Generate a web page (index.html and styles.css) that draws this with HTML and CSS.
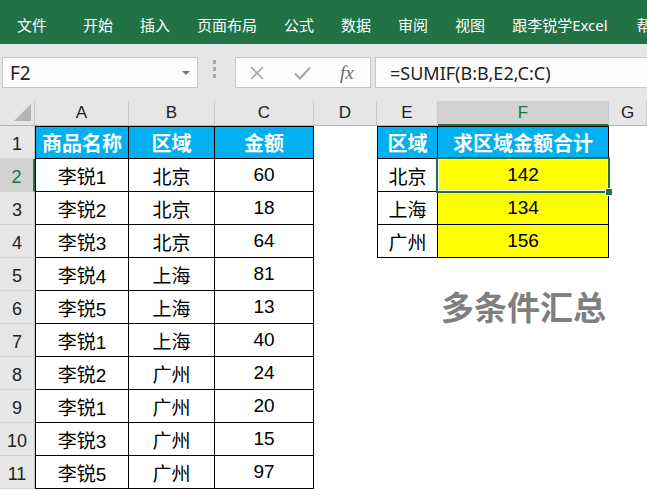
FILE: index.html
```html
<!DOCTYPE html>
<html lang="zh-CN">

<head>
    <meta charset="UTF-8">
    <title>多条件汇总</title>
    <link rel="stylesheet" href="styles.css">
</head>

<body>
    <div class="ribbon">
        <span class="tab tab-file">文件</span>
        <span class="tab">开始</span>
        <span class="tab">插入</span>
        <span class="tab">页面布局</span>
        <span class="tab">公式</span>
        <span class="tab">数据</span>
        <span class="tab">审阅</span>
        <span class="tab">视图</span>
        <span class="tab">跟李锐学Excel</span>
        <span class="tab">帮助</span>
    </div>

    <div class="fbar">
        <div class="namebox">
            <span>F2</span>
            <i class="caret"></i>
        </div>
        <div class="grip"><b></b><b></b><b></b></div>
        <div class="fnbox">
            <svg class="ico-x" width="14" height="14" viewBox="0 0 14 14">
                <path d="M1 1 L13 13 M13 1 L1 13" stroke="#a8a8a8" stroke-width="1.6" fill="none" />
            </svg>
            <svg class="ico-ok" width="17" height="14" viewBox="0 0 17 14">
                <path d="M1 7.5 L6 12.5 L16 1.5" stroke="#a8a8a8" stroke-width="2.2" fill="none" />
            </svg>
            <span class="fx">fx</span>
        </div>
        <div class="formula">=SUMIF(B:B,E2,C:C)</div>
    </div>

    <div class="sheet">
        <!-- column headers -->
        <div class="corner"></div>
        <div class="hd">A</div>
        <div class="hd">B</div>
        <div class="hd">C</div>
        <div class="hd">D</div>
        <div class="hd">E</div>
        <div class="hd hd-sel">F</div>
        <div class="hd">G</div>

        <!-- row 1 -->
        <div class="rh">1</div>
        <div class="t th l tp">商品名称</div>
        <div class="t th tp">区域</div>
        <div class="t th tp">金额</div>
        <div class="c"></div>
        <div class="t th l tp">区域</div>
        <div class="t th tp">求区域金额合计</div>
        <div class="c"></div>

        <!-- row 2 -->
        <div class="rh rh-sel">2</div>
        <div class="t l">李锐1</div>
        <div class="t">北京</div>
        <div class="t">60</div>
        <div class="c"></div>
        <div class="t l">北京</div>
        <div class="t y active">142<span class="handle"></span></div>
        <div class="c"></div>

        <!-- row 3 -->
        <div class="rh">3</div>
        <div class="t l">李锐2</div>
        <div class="t">北京</div>
        <div class="t">18</div>
        <div class="c"></div>
        <div class="t l">上海</div>
        <div class="t y">134</div>
        <div class="c"></div>

        <!-- row 4 -->
        <div class="rh">4</div>
        <div class="t l">李锐3</div>
        <div class="t">北京</div>
        <div class="t">64</div>
        <div class="c"></div>
        <div class="t l">广州</div>
        <div class="t y">156</div>
        <div class="c"></div>

        <div class="rh">5</div>
        <div class="t l">李锐4</div>
        <div class="t">上海</div>
        <div class="t">81</div>
        <div class="c span4"></div>

        <div class="rh">6</div>
        <div class="t l">李锐5</div>
        <div class="t">上海</div>
        <div class="t">13</div>
        <div class="c span4"></div>

        <div class="rh">7</div>
        <div class="t l">李锐1</div>
        <div class="t">上海</div>
        <div class="t">40</div>
        <div class="c span4"></div>

        <div class="rh">8</div>
        <div class="t l">李锐2</div>
        <div class="t">广州</div>
        <div class="t">24</div>
        <div class="c span4"></div>

        <div class="rh">9</div>
        <div class="t l">李锐1</div>
        <div class="t">广州</div>
        <div class="t">20</div>
        <div class="c span4"></div>

        <div class="rh">10</div>
        <div class="t l">李锐3</div>
        <div class="t">广州</div>
        <div class="t">15</div>
        <div class="c span4"></div>

        <div class="rh">11</div>
        <div class="t l">李锐5</div>
        <div class="t">广州</div>
        <div class="t">97</div>
        <div class="c span4"></div>

        <div class="title">多条件汇总</div>
    </div>
</body>

</html>
```

FILE: styles.css
```css
body {
    margin: 0;
    width: 647px;
    height: 491px;
    overflow: hidden;
    background-color: #fff;
    font-family: "Liberation Sans", "Noto Sans CJK SC", sans-serif;
}

/* ribbon */
.ribbon {
    height: 44px;
    box-sizing: border-box;
    padding: 4px 0 0 17px;
    display: flex;
    align-items: center;
    gap: 27px;
    background-color: #217346;
    color: #fff;
    font-family: "Noto Sans CJK SC", sans-serif;
    font-size: 15px;
    white-space: nowrap;
}

.tab-file {
    margin-right: 9px;
}

.tab:nth-child(9) {
    font-family: "Noto Sans", "Noto Sans CJK SC", sans-serif;
    margin-right: 2px;
}

/* formula bar */
.fbar {
    height: 57px;
    box-sizing: border-box;
    padding-top: 13px;
    display: flex;
    align-items: flex-start;
    background-color: #e6e6e6;
}

.namebox,
.fnbox,
.formula {
    height: 31px;
    box-sizing: border-box;
    border: 1px solid #c6c6c6;
    background-color: #fdfdfd;
    display: flex;
    align-items: center;
}

.namebox {
    width: 196px;
    margin-left: 2px;
    padding: 0 0 0 7px;
    font-family: "Noto Sans", sans-serif;
    font-size: 19px;
    color: #222;
    justify-content: space-between;
}

.caret {
    width: 0;
    height: 0;
    margin-right: 7px;
    border-left: 4px solid transparent;
    border-right: 4px solid transparent;
    border-top: 4px solid #767676;
}

.grip {
    width: 4px;
    margin: 3px 0 0 15px;
    display: flex;
    flex-direction: column;
    gap: 3px;
}

.grip b {
    display: block;
    width: 3px;
    height: 4px;
    background-color: #a9a9a9;
}

.fnbox {
    width: 136px;
    margin-left: 18px;
    padding-left: 14px;
}

.ico-ok {
    margin-left: 30px;
}

.fx {
    margin-left: 29px;
    font-family: "Liberation Serif", serif;
    font-style: italic;
    font-size: 19px;
    color: #6a6a6a;
}

.formula {
    flex: 1;
    margin-left: 4px;
    padding-left: 14px;
    border-right: none;
    font-family: "Noto Sans", sans-serif;
    font-size: 18px;
    color: #222;
}

/* sheet */
.sheet {
    position: relative;
    display: grid;
    grid-template-columns: 35px 94px 86px 99px 63px 61px 171px 1fr;
    grid-template-rows: 25px repeat(11, 33px);
    font-size: 19px;
    color: #000;
}

.sheet > div {
    box-sizing: border-box;
    display: flex;
    align-items: center;
    justify-content: center;
}

.corner {
    position: relative;
    background-color: #e6e6e6;
    border-right: 1px solid #c8c8c8;
    border-bottom: 1px solid #b5b5b5;
}

.corner::after {
    content: "";
    position: absolute;
    right: 3px;
    bottom: 4px;
    width: 0;
    height: 0;
    border-left: 17px solid transparent;
    border-bottom: 17px solid #b4b4b4;
}

.hd {
    background-color: #e6e6e6;
    border-right: 1px solid #c8c8c8;
    border-bottom: 1px solid #b5b5b5;
    font-size: 17px;
    color: #222;
}

.hd-sel {
    background-color: #d2d2d2;
    border-bottom: 2px solid #217346;
    color: #217346;
}

.rh {
    background-color: #e6e6e6;
    border-right: 1px solid #c8c8c8;
    border-bottom: 1px solid #d4d4d4;
    padding-top: 5px;
    font-size: 18px;
    color: #222;
}

.rh-sel {
    background-color: #d2d2d2;
    border-right: 2px solid #217346;
    color: #217346;
}

.t {
    border-right: 1px solid #000;
    border-bottom: 1px solid #000;
}

.t.l {
    border-left: 1px solid #000;
}

.t.tp {
    border-top: 1px solid #000;
}

.th {
    background-color: #00b0f0;
    color: #fff;
    font-weight: bold;
    font-size: 20px;
}

.y {
    background-color: #ffff00;
}

.span4 {
    grid-column: span 4;
}

.active {
    position: relative;
}

.active::after {
    content: "";
    position: absolute;
    left: -2px;
    top: -2px;
    right: -2px;
    bottom: -2px;
    border: 2px solid #217346;
    box-shadow: inset 0 0 0 1px #fff;
}

.handle {
    position: absolute;
    right: -5px;
    bottom: -5px;
    width: 6px;
    height: 6px;
    background-color: #217346;
    border: 1px solid #fff;
    z-index: 1;
}

.title {
    position: absolute;
    left: 441px;
    top: 189px;
    font-family: "Noto Sans CJK SC", sans-serif;
    font-size: 33px;
    font-weight: bold;
    line-height: 1;
    color: #7f7f7f;
}
```
